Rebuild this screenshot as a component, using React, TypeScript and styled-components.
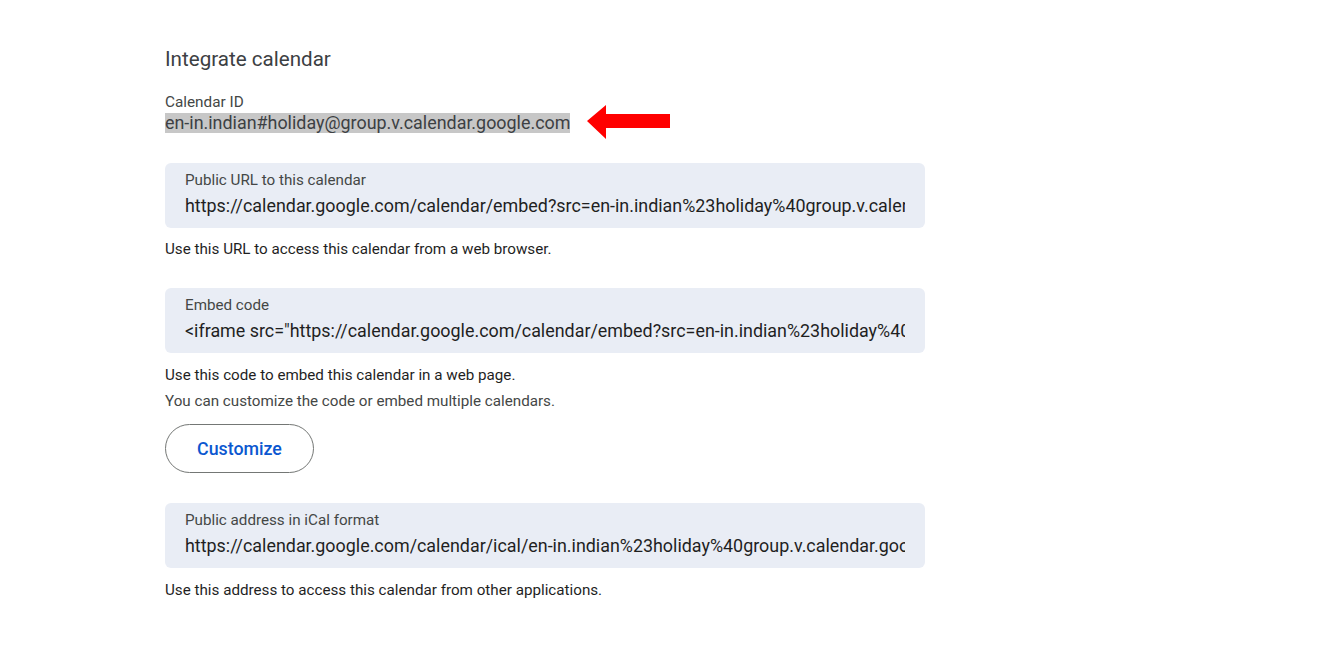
import React from 'react';
import styled, { createGlobalStyle } from 'styled-components';

const GlobalStyle = createGlobalStyle`
  body {
    margin: 0;
    background: #ffffff;
    font-family: Roboto, "Noto Sans", Arial, sans-serif;
    color: #1f1f1f;
  }
`;

const Page = styled.div`
  padding: 46px 0 40px 165px;
  width: 760px;
`;

const Title = styled.h2`
  margin: 0;
  font-size: 20.6px;
  font-weight: 400;
  line-height: 26px;
  color: #3c4043;
`;

const IdLabel = styled.div`
  margin-top: 21px;
  font-size: 15.3px;
  line-height: 18px;
  color: #444746;
`;

const IdRow = styled.div`
  display: flex;
  align-items: center;
  gap: 17px;
  height: 20px;
  margin-top: 2px;
`;

const IdText = styled.span`
  background: #c7c7c7;
  font-size: 17.9px;
  line-height: 20px;
  color: #3c4043;
  white-space: nowrap;
`;

const Field = styled.div<{ $top: number }>`
  margin-top: ${p => p.$top}px;
  background: #e9edf5;
  border-radius: 6px;
  height: 65px;
  padding: 8px 20px 0;
  box-sizing: border-box;
  overflow: hidden;
`;

const FieldLabel = styled.div`
  font-size: 15.2px;
  line-height: 18px;
  color: #444746;
`;

const FieldValue = styled.div`
  margin-top: 5px;
  font-size: 17.9px;
  line-height: 24px;
  color: #1f1f1f;
  white-space: nowrap;
  overflow: hidden;
`;

const Hint = styled.div<{ $top: number; $muted?: boolean }>`
  margin-top: ${p => p.$top}px;
  font-size: 15.2px;
  line-height: 20px;
  color: ${p => (p.$muted ? '#444746' : '#1f1f1f')};
`;

const PillButton = styled.button`
  margin-top: 13px;
  width: 149px;
  height: 49px;
  border: 1px solid #747775;
  border-radius: 25px;
  background: #ffffff;
  color: #0b57d0;
  font-family: Roboto, Arial, sans-serif;
  font-size: 17.8px;
  font-weight: 500;
  cursor: pointer;
`;

const Arrow = () => (
  <svg width="84" height="36" viewBox="0 0 84 36">
    <polygon points="0,16 19,0 19,9 83,9 83,23 19,23 19,34" fill="#ff0000" />
  </svg>
);

export default function App() {
  return (
    <Page>
      <GlobalStyle />
      <Title>Integrate calendar</Title>
      <IdLabel>Calendar ID</IdLabel>
      <IdRow>
        <IdText>en-in.indian#holiday@group.v.calendar.google.com</IdText>
        <Arrow />
      </IdRow>

      <Field $top={30}>
        <FieldLabel>Public URL to this calendar</FieldLabel>
        <FieldValue>https://calendar.google.com/calendar/embed?src=en-in.indian%23holiday%40group.v.calendar.google.com&amp;ctz=Asia%2FKolkata</FieldValue>
      </Field>
      <Hint $top={11}>Use this URL to access this calendar from a web browser.</Hint>

      <Field $top={29}>
        <FieldLabel>Embed code</FieldLabel>
        <FieldValue>{'<iframe src="https://calendar.google.com/calendar/embed?src=en-in.indian%23holiday%40group.v.calendar.google.com" style="border: 0" width="800" height="600"></iframe>'}</FieldValue>
      </Field>
      <Hint $top={12}>Use this code to embed this calendar in a web page.</Hint>
      <Hint $top={6} $muted>You can customize the code or embed multiple calendars.</Hint>
      <PillButton>Customize</PillButton>

      <Field $top={30}>
        <FieldLabel>Public address in iCal format</FieldLabel>
        <FieldValue>https://calendar.google.com/calendar/ical/en-in.indian%23holiday%40group.v.calendar.google.com/public/basic.ics</FieldValue>
      </Field>
      <Hint $top={12}>Use this address to access this calendar from other applications.</Hint>
    </Page>
  );
}
